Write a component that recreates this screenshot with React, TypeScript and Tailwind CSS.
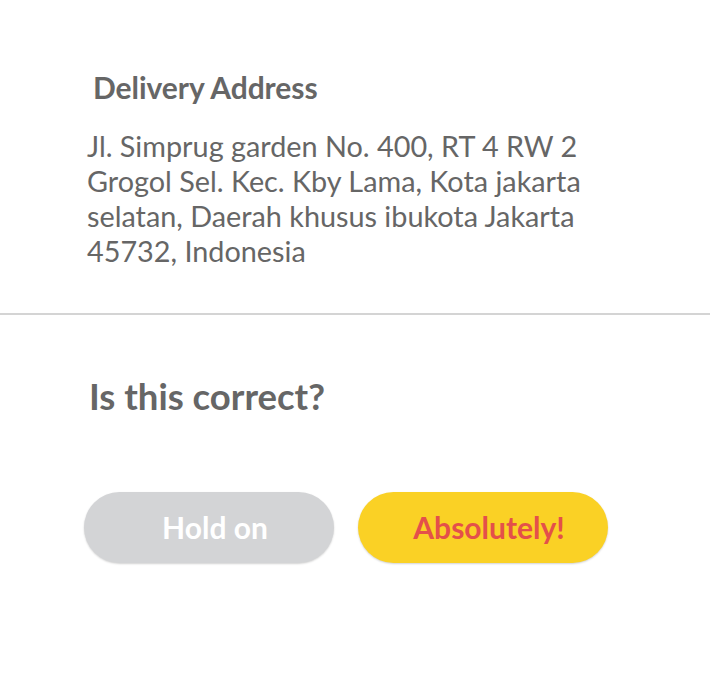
import React from "react";

export default function App() {
  return (
    <div className="w-[710px] h-[685px] bg-white text-[#666666] font-['Lato',sans-serif]">
      <div className="pt-[69px] pb-[44px] border-b-2 border-[#d4d4d4]">
        <h2 className="pl-[93px] text-[30px] leading-[36px] font-bold tracking-[-0.05px]">Delivery Address</h2>
        <p className="mt-[24px] pl-[87px] pr-[80px] text-[28.8px] leading-[35px] font-normal">
          Jl. Simprug garden No. 400, RT 4 RW 2<br />
          Grogol Sel. Kec. Kby Lama, Kota jakarta<br />
          selatan, Daerah khusus ibukota Jakarta<br />
          45732, Indonesia
        </p>
      </div>
      <h1 className="mt-[60px] pl-[89px] text-[36.5px] leading-[42px] font-bold">Is this correct?</h1>
      <div className="mt-[75px] pl-[84px] flex gap-[24px]">
        <button className="w-[250px] h-[71px] rounded-full bg-[#d3d4d6] text-white text-[30px] font-bold pl-[12px] shadow-[0_1px_2px_rgba(0,0,0,0.18)]">
          Hold on
        </button>
        <button className="w-[250px] h-[71px] rounded-full bg-[#fad125] text-[#e4504a] text-[30px] font-bold pl-[12px] shadow-[0_1px_2px_rgba(0,0,0,0.18)]">
          Absolutely!
        </button>
      </div>
    </div>
  );
}
